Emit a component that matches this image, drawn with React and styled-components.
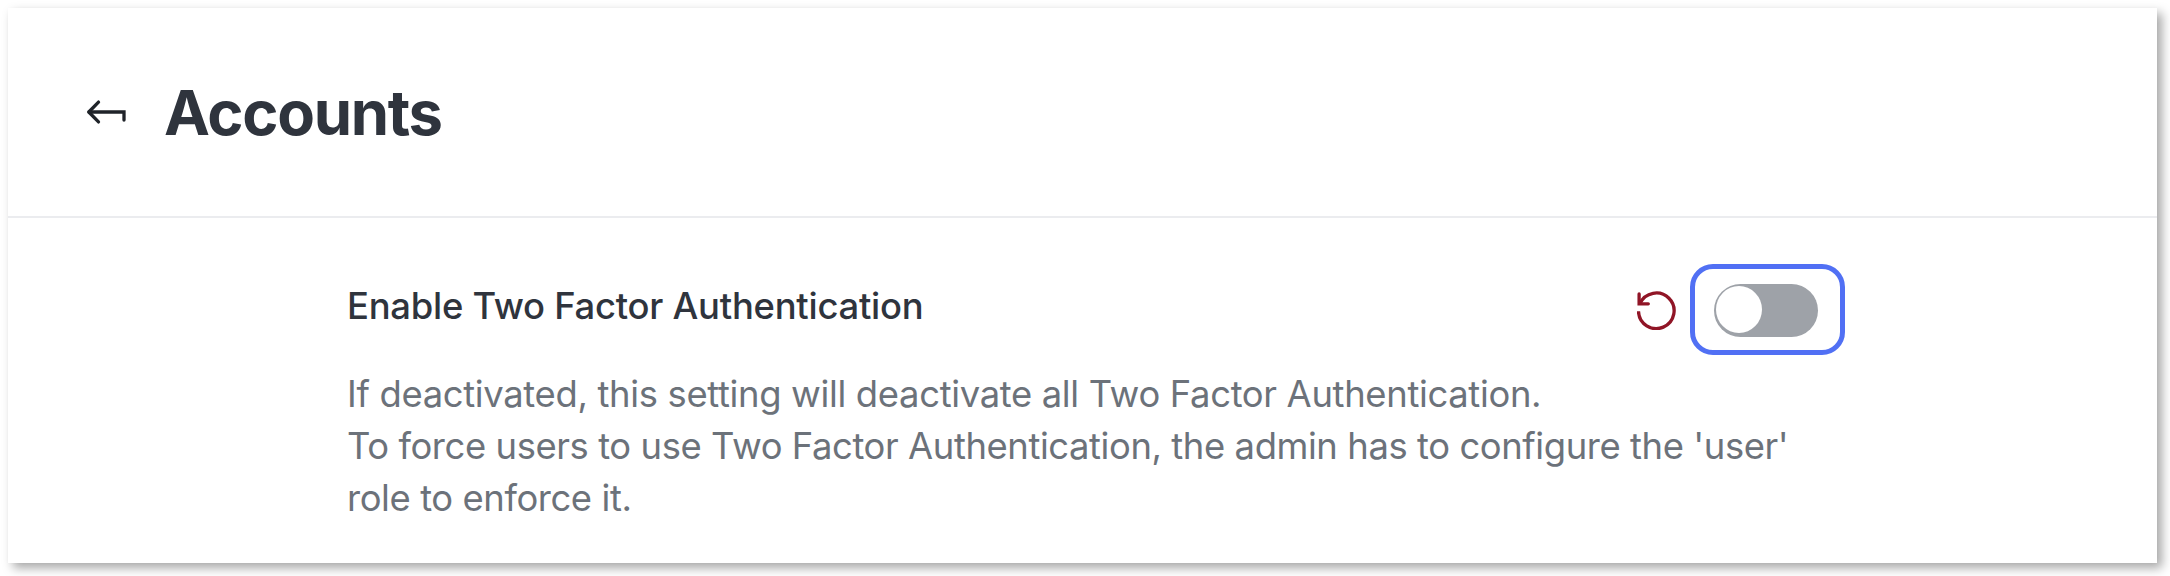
import React, { useState } from 'react'
import styled, { createGlobalStyle } from 'styled-components'

const GlobalStyle = createGlobalStyle`
  * {
    box-sizing: border-box;
  }

  body {
    margin: 0;
    background: #ffffff;
    font-family: Inter, "Liberation Sans", sans-serif;
  }
`;

const Page = styled.div`
  height: 576px;
  padding: 8px 13px 13px 8px;
  overflow: hidden;
`;

const Panel = styled.main`
  height: 555px;
  background: #ffffff;
  box-shadow: 5px 5px 10px rgba(0, 0, 0, 0.35), 0 0 2px rgba(0, 0, 0, 0.02);
`;

const Header = styled.header`
  display: flex;
  align-items: center;
  height: 210px;
  padding: 0 76px;
  border-bottom: 2px solid #ebecef;
`;

const IconButton = styled.button`
  display: flex;
  padding: 0;
  border: 0;
  background: transparent;
  color: ${props => props.$danger ? "#901526" : "#1f2329"};
  cursor: pointer;
`;

const Title = styled.h1`
  margin: 2px 0 0 36px;
  font-size: 61.6px;
  font-weight: 700;
  line-height: 84px;
  letter-spacing: -1.3px;
  color: #2f343d;
`;

const Field = styled.section`
  width: 1498px;
  margin-left: 339px;
  padding-top: 46px;
`;

const FieldRow = styled.div`
  display: flex;
  justify-content: space-between;
  height: 104px;
`;

const Label = styled.label`
  margin-top: 16px;
  font-size: 36.4px;
  font-weight: 500;
  line-height: 52px;
  letter-spacing: -0.25px;
  color: #2f343d;
`;

const Actions = styled.div`
  display: flex;
  align-items: center;
  gap: 13px;
  height: 91px;
`;

const FocusRing = styled.div`
  padding: 15px 22px 13px 19px;
  border: 5px solid #5170f4;
  border-radius: 23px;
`;

const Toggle = styled.button`
  display: flex;
  justify-content: ${props => props.$checked ? "flex-end" : "flex-start"};
  align-items: center;
  width: 104px;
  height: 53px;
  padding: 0 2px 2px;
  border: 0;
  border-radius: 27px;
  background: ${props => props.$checked ? "#1d74f5" : "#9ea2a8"};
`;

const Knob = styled.span`
  width: 46px;
  height: 47px;
  border-radius: 50%;
  background: #ffffff;
`;

const Hint = styled.p`
  margin: 0;
  font-size: 36.4px;
  font-weight: 400;
  line-height: 52px;
  letter-spacing: ${props => props.$tight ? "-0.41px" : "-0.33px"};
  color: #6c727a;
`;

const BackIcon = () => (
  <svg width="44" height="28" viewBox="0 0 44 28" fill="none" stroke="currentColor" strokeWidth="3.3" strokeLinecap="round">
    <path d="M14.5 4.1 L4.8 14 L14.5 23.9" strokeLinejoin="round" />
    <path d="M5 14 H40 V22" />
  </svg>
);

const ResetIcon = () => (
  <svg width="40" height="40" viewBox="0 0 40 40" fill="none" stroke="currentColor" strokeWidth="3.3">
    <path d="M1.5 21.3 A17.8 17.8 0 1 0 3 13.6" />
    <path d="M2.1 4 V13.8 H11.3" strokeLinecap="round" />
  </svg>
);

const App = () => {

  const [enabled, setEnabled] = useState(false);

  return (
    <>
      <GlobalStyle />
      <Page>
        <Panel>
          <Header>
            <IconButton aria-label="Back">
              <BackIcon />
            </IconButton>
            <Title>Accounts</Title>
          </Header>
          <Field>
            <FieldRow>
              <Label htmlFor="two-factor">Enable Two Factor Authentication</Label>
              <Actions>
                <IconButton $danger aria-label="Reset" onClick={() => setEnabled(false)}>
                  <ResetIcon />
                </IconButton>
                <FocusRing>
                  <Toggle id="two-factor" role="switch" aria-checked={enabled} $checked={enabled} onClick={() => setEnabled(!enabled)}>
                    <Knob />
                  </Toggle>
                </FocusRing>
              </Actions>
            </FieldRow>
            <Hint>If deactivated, this setting will deactivate all Two Factor Authentication.</Hint>
            <Hint $tight>
              To force users to use Two Factor Authentication, the admin has to configure the 'user'<br />
              role to enforce it.
            </Hint>
          </Field>
        </Panel>
      </Page>
    </>
  )
}

export default App
